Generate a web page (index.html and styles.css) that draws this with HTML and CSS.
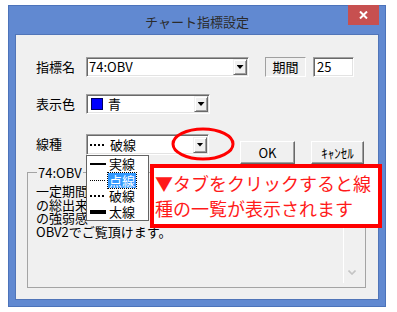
FILE: index.html
```html
<!DOCTYPE html>
<html>
<head>
    <meta charset="utf-8">
    <title>チャート指標設定</title>
    <link rel="stylesheet" href="styles.css">
</head>
<body>
    <div class="window">
        <div class="titlebar">
            <span class="title">チャート指標設定</span>
            <span class="close-btn">
                <svg width="9" height="8" viewBox="0 0 9 8"><path d="M1 0.5 L8 7.5 M8 0.5 L1 7.5" stroke="#fff" stroke-width="2"/></svg>
            </span>
        </div>
        <div class="client">
            <div class="row">
                <span class="label">指標名</span>
                <div class="combo combo-name">
                    <span class="combo-text">74:OBV</span>
                    <span class="drop-btn"></span>
                </div>
                <span class="static-box">期間</span>
                <div class="edit">25</div>
            </div>

            <div class="row row-color">
                <span class="label">表示色</span>
                <div class="combo combo-color">
                    <span class="swatch"></span>
                    <span class="combo-text">青</span>
                    <span class="drop-btn"></span>
                </div>
            </div>

            <div class="row row-line">
                <span class="label">線種</span>
                <div class="combo combo-line">
                    <span class="sample sample-dash"></span>
                    <span class="combo-text">破線</span>
                    <span class="drop-btn"></span>
                </div>
                <button class="btn btn-ok">OK</button>
                <button class="btn btn-cancel">ｷｬﾝｾﾙ</button>
            </div>

            <fieldset class="group">
                <legend>74:OBV</legend>
                <div class="memo">
                    <!-- the rest of lines 1-3 sits under the open list and the note -->
                    <div class="memo-text">
                        一定期間<br>
                        の総出来<br>
                        の強弱感<br>
                        OBV2でご覧頂けます。
                    </div>
                    <div class="vscroll">
                        <svg width="8" height="5" viewBox="0 0 8 5"><path d="M0.5 0.5 L4 4 L7.5 0.5" fill="none" stroke="#c4c4c4" stroke-width="1.6"/></svg>
                    </div>
                </div>
            </fieldset>

            <ul class="droplist">
                <li><span class="sample sample-solid"></span>実線</li>
                <li><span class="sample sample-dot"></span><span class="selected">点線</span></li>
                <li><span class="sample sample-dash"></span>破線</li>
                <li><span class="sample sample-thick"></span>太線</li>
            </ul>

            <svg class="ring" width="64" height="34" viewBox="0 0 64 34">
                <ellipse cx="32" cy="17" rx="30" ry="15" fill="none" stroke="#ff0000" stroke-width="3"/>
            </svg>

            <div class="callout">▼タブをクリックすると線<br>種の一覧が表示されます</div>
        </div>
    </div>
</body>
</html>
```

FILE: styles.css
```css
* { box-sizing: border-box; margin: 0; padding: 0; }

body {
    font-family: "Noto Sans CJK JP", "Noto Sans", sans-serif;
    font-size: 13px;
    color: #000;
    background: #fff;
}

.window {
    position: relative;
    display: flex;
    flex-direction: column;
    width: 378px;
    height: 302px;
    margin: 5px 0 0 8px;
    padding: 0 7px 7px;
    background: #6189d1;
    border: 1px solid #4c73ba;
}

.titlebar {
    display: grid;
    grid-template-columns: 37px 1fr 31px;
    height: 29px;
    margin: 0 -7px;
    padding-right: 6px;
}

.title {
    grid-column: 2;
    align-self: center;
    text-align: center;
    color: #2b2b2b;
    line-height: 16px;
    margin-top: 2px;
}

.close-btn {
    grid-column: 3;
    display: flex;
    align-items: center;
    justify-content: center;
    height: 20px;
    margin-top: -1px;
    background: #c75050;
}

.client {
    position: relative;
    flex: 1;
    padding: 22px 0 0 11px;
    background: #f0f0f0;
    box-shadow: 0 0 0 1px #5175b8;
}

.row {
    display: flex;
    align-items: flex-start;
    padding-left: 9px;
}

.row-color { margin-top: 17px; }
.row-line { margin-top: 20px; height: 30px; }

.label {
    width: 50px;
    line-height: 20px;
}

.combo {
    display: flex;
    align-items: center;
    height: 20px;
    padding: 0 1px 0 2px;
    background: #fff;
    border: 1px solid;
    border-color: #a0a0a0 #fff #fff #a0a0a0;
    box-shadow: inset 1px 1px 0 #696969, inset -1px -1px 0 #e3e3e3;
}

.combo-name { width: 163px; }
.combo-color { width: 124px; }
.combo-line { width: 123px; height: 21px; }

.combo-text { line-height: 16px; }

.drop-btn {
    display: flex;
    align-items: center;
    justify-content: center;
    width: 14px;
    height: 16px;
    margin-left: auto;
    background: #f0f0f0;
    border: 1px solid;
    border-color: #f0f0f0 #696969 #696969 #f0f0f0;
    box-shadow: inset 1px 1px 0 #fff, inset -1px -1px 0 #a0a0a0;
}

.drop-btn::after {
    content: "";
    width: 7px;
    height: 4px;
    background: #000;
    clip-path: polygon(0 0, 100% 0, 50% 100%);
}

.swatch {
    width: 12px;
    height: 12px;
    margin: 0 5px 0 2px;
    background: #0000ff;
    border: 1px solid #000060;
}

.static-box {
    width: 41px;
    height: 20px;
    margin-left: 16px;
    text-align: center;
    line-height: 18px;
    border: 1px solid;
    border-color: #a0a0a0 #fff #fff #a0a0a0;
}

.edit {
    width: 41px;
    height: 20px;
    margin-left: 7px;
    padding-left: 3px;
    line-height: 18px;
    background: #fff;
    border: 1px solid;
    border-color: #a0a0a0 #fff #fff #a0a0a0;
    box-shadow: inset 1px 1px 0 #696969, inset -1px -1px 0 #e3e3e3;
}

.btn {
    height: 23px;
    margin-top: 7px;
    font: inherit;
    color: #000;
    background: #f0f0f0;
    border: 1px solid;
    border-color: #fff #696969 #696969 #fff;
    box-shadow: inset -1px -1px 0 #a0a0a0;
}

.btn-ok { width: 55px; margin-left: 31px; }
.btn-cancel { width: 53px; margin-left: 16px; }

/* line samples */
.sample {
    display: block;
    width: 16px;
    margin-right: 3px;
    flex-shrink: 0;
}

.sample-solid { height: 2px; background: #000; }
.sample-thick { height: 4px; background: #000; }
.sample-dot {
    height: 1px;
    background: repeating-linear-gradient(90deg, #000 0 1px, transparent 1px 2px);
}
.sample-dash {
    height: 2px;
    background: repeating-linear-gradient(90deg, #000 0 2px, transparent 2px 4px);
}

.combo-line .sample-dash { width: 14px; margin: 0 6px 0 1px; }

.group {
    width: 339px;
    height: 122px;
    margin-top: 2px;
    padding: 0 2px 4px;
    border: 1px solid #a4a4a4;
}

.group legend {
    margin-left: 7px;
    padding: 0 1px;
    line-height: 13px;
}

.memo {
    display: flex;
    height: 100%;
}

.memo-text {
    flex: 1;
    padding: 5px 0 0 6px;
    line-height: 13.5px;
    white-space: nowrap;
    overflow: hidden;
}

.vscroll {
    display: flex;
    align-items: flex-end;
    justify-content: center;
    width: 16px;
    margin-right: 4px;
    padding-bottom: 8px;
    border-left: 1px solid #fff;
}

.droplist {
    position: absolute;
    left: 70px;
    top: 120px;
    width: 63px;
    list-style: none;
    background: #fff;
    border: 1px solid #646464;
    z-index: 2;
}

.droplist li {
    display: flex;
    align-items: center;
    height: 16px;
    padding-left: 3px;
    line-height: 16px;
}

.selected {
    margin-left: -1px;
    padding: 0 1px;
    line-height: 15px;
    color: #fff;
    background: #3399ff;
    outline: 1px dotted #000;
}

.ring {
    position: absolute;
    left: 155px;
    top: 92px;
    z-index: 3;
}

.callout {
    position: absolute;
    left: 134px;
    top: 129px;
    width: 232px;
    height: 64px;
    padding: 3px 0 0 1px;
    color: #ff1a1a;
    font-size: 18px;
    line-height: 25px;
    white-space: nowrap;
    background: #fff;
    border: 4px solid #ff0000;
    z-index: 3;
}
```
